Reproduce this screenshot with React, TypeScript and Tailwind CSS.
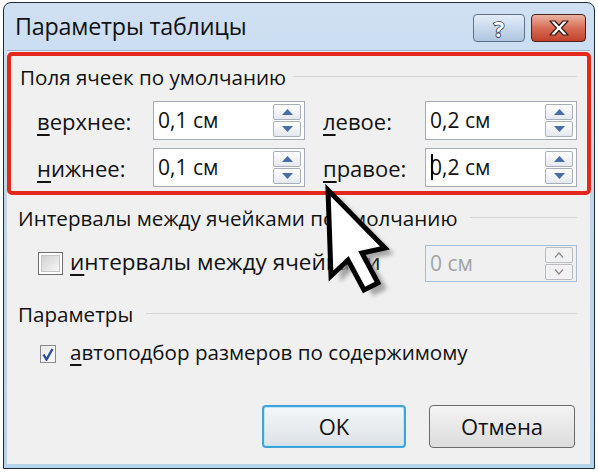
// Windows 7 "Параметры таблицы" dialog with a highlighted group and a big mouse pointer.

const FONT = "font-['Open_Sans','Noto_Sans',sans-serif]";

function Spin({ disabled = false }: { disabled?: boolean }) {
  const half =
    'flex-1 flex items-center justify-center rounded-[2px] border ' +
    (disabled
      ? 'border-[#b9bdc2] bg-[#f2f2f2]'
      : 'border-[#a8b0ba] bg-gradient-to-b from-white to-[#e4e8ee]');
  return (
    <div className="flex flex-col w-[28px] h-[33px] gap-[1px]">
      <div className={half}>
        {disabled ? (
          <svg width="10" height="6" viewBox="0 0 10 6">
            <path d="M1 5.5 L5 1 L9 5.5" fill="none" stroke="#8a8a8a" strokeWidth="1.2" />
          </svg>
        ) : (
          <svg width="11" height="6" viewBox="0 0 11 6">
            <path d="M0 6 L5.5 0 L11 6Z" fill="#4a6ca6" />
          </svg>
        )}
      </div>
      <div className={half}>
        {disabled ? (
          <svg width="10" height="6" viewBox="0 0 10 6">
            <path d="M1 0.5 L5 5 L9 0.5" fill="none" stroke="#8a8a8a" strokeWidth="1.2" />
          </svg>
        ) : (
          <svg width="11" height="6" viewBox="0 0 11 6">
            <path d="M0 0 L5.5 6 L11 0Z" fill="#4a6ca6" />
          </svg>
        )}
      </div>
    </div>
  );
}

function Field({ value, caret = false, disabled = false }: { value: string; caret?: boolean; disabled?: boolean }) {
  return (
    <div
      className={
        'flex items-center justify-between h-full pl-[4px] pr-[3px] border ' +
        (disabled ? 'bg-[#f0f0f0] border-[#a6bcd6]' : 'bg-white border-[#a5acb5]')
      }
    >
      <span className={'relative text-[21px] leading-none ' + (disabled ? 'text-[#a3a3a3]' : 'text-[#111]')}>
        {caret && <span className="absolute left-[1px] top-[-3px] w-[1.5px] h-[26px] bg-black" />}
        {value}
      </span>
      <Spin disabled={disabled} />
    </div>
  );
}

function Heading({ children, lineClass }: { children: React.ReactNode; lineClass?: string }) {
  return (
    <div className="flex items-center h-[26px]">
      <span className="text-[20.6px] leading-none text-[#111] whitespace-nowrap">{children}</span>
      <div className={'flex-1 h-[2px] border-t border-[#d8d8d8] border-b-white ' + (lineClass || '')} />
    </div>
  );
}

function Label({ pre, rest, size = 'text-[22px]' }: { pre: string; rest: string; size?: string }) {
  return (
    <span className={size + ' leading-none text-[#111] whitespace-nowrap'}>
      <span className="underline decoration-2 underline-offset-[4px]">{pre}</span>
      {rest}
    </span>
  );
}

function Cursor() {
  const pts = '8,7 11,93 28,77 44,107 58,100 42,70 65,65';
  return (
    <svg
      className="absolute left-[320px] top-[183px] pointer-events-none"
      width="90"
      height="130"
      viewBox="0 0 90 130"
    >
      <defs>
        <filter id="sh" x="-20%" y="-20%" width="140%" height="140%">
          <feGaussianBlur stdDeviation="2" />
        </filter>
      </defs>
      <polygon points={pts} transform="translate(9,6)" fill="#8d8d8d" opacity="0.75" filter="url(#sh)" />
      <polygon points={pts} fill="#fff" stroke="#000" strokeWidth="5" strokeLinejoin="miter" />
    </svg>
  );
}

export default function App() {
  return (
    <div className={`relative w-[598px] h-[472px] bg-white pt-[2px] pl-[3px] ${FONT}`}>
      <div className="flex flex-col w-[592px] h-[467px] border border-[#1f2a36] rounded-t-[8px] bg-gradient-to-b from-[#cfe0f2] via-[#bfd5ec] to-[#b4d4ec]">
        {/* title bar */}
        <div className="flex items-center justify-between h-[47px] pl-[11px] pr-[8px]">
          <span className="text-[23.3px] leading-none text-[#111] tracking-[-0.2px]">Параметры таблицы</span>
          <div className="flex items-center gap-[6px] pt-[2px]">
            <div className="flex items-center justify-center w-[52px] h-[28px] rounded-[4px] border border-[#5f7187] bg-gradient-to-b from-[#e4edf8] via-[#c9d9ec] to-[#aec4df]">
              <span className="text-[22px] font-bold leading-none text-white [-webkit-text-stroke:1.5px_#2b2b2b] [paint-order:stroke_fill]">?</span>
            </div>
            <div className="flex items-center justify-center w-[55px] h-[28px] rounded-[4px] border border-[#4b2219] bg-gradient-to-b from-[#eab3a3] via-[#d76b55] to-[#c2412a]">
              <svg width="22" height="16" viewBox="0 0 22 16">
                <path
                  d="M2 1 H7 L11 5.5 L15 1 H20 L13.5 8 L20 15 H15 L11 10.5 L7 15 H2 L8.5 8 Z"
                  fill="#fff"
                  stroke="#3a1a12"
                  strokeWidth="1.2"
                  strokeLinejoin="round"
                />
              </svg>
            </div>
          </div>
        </div>

        {/* client area */}
        <div className="flex-1 flex flex-col ml-[3px] mr-[4px] mb-[4px] bg-[#f0f0f0] border-t border-[#9fb4cc]">
          {/* highlighted group */}
          <div className="mt-[1px] ml-[0px] mr-[-1px] h-[143px] border-4 border-[#e5281c] rounded-[5px] pl-[9px] pr-[10px] pt-[8px]">
            <Heading lineClass="ml-[7px]">Поля ячеек по умолчанию</Heading>
            <div className="grid grid-cols-[116px_152px_120px_152px] grid-rows-[39px_39px] gap-y-[8px] mt-[11px] ml-[17px]">
              <div className="flex items-center">
                <Label pre="в" rest="ерхнее:" />
              </div>
              <Field value="0,1 см" />
              <div className="flex items-center pl-[18px]">
                <Label pre="л" rest="евое:" />
              </div>
              <Field value="0,2 см" />
              <div className="flex items-center">
                <Label pre="н" rest="ижнее:" />
              </div>
              <Field value="0,1 см" />
              <div className="flex items-center pl-[18px]">
                <Label pre="п" rest="равое:" />
              </div>
              <Field value="0,2 см" caret />
            </div>
          </div>

          {/* spacing section */}
          <div className="mt-[10px] pl-[11px] pr-[13px]">
            <Heading lineClass="ml-[12px]">Интервалы между ячейками по умолчанию</Heading>
          </div>
          <div className="flex items-center h-[37px] mt-[14px] pl-[31px] pr-[13px]">
            <div className="w-[25px] h-[23px] border border-[#6f6f6f] p-[2px] bg-white">
              <div className="w-full h-full border border-[#c4c4c4] bg-gradient-to-br from-[#d2d2d2] to-[#f6f6f6]" />
            </div>
            <span className="ml-[7px]">
              <Label pre="и" rest="нтервалы между ячейками" size="text-[22.5px]" />
            </span>
            <div className="ml-auto w-[152px] h-full">
              <Field value="0 см" disabled />
            </div>
          </div>

          {/* options section */}
          <div className="mt-[19px] pl-[11px] pr-[13px]">
            <Heading lineClass="ml-[13px]">Параметры</Heading>
          </div>
          <div className="flex items-center h-[26px] mt-[14px] pl-[33px]">
            <div className="flex items-center justify-center w-[16px] h-[18px] border border-[#8a8a8a] bg-gradient-to-br from-[#e6e6e6] to-white">
              <svg width="12" height="13" viewBox="0 0 12 13">
                <path d="M1.5 6.5 L4.5 11.5 L10.5 1" fill="none" stroke="#2b4d9e" strokeWidth="2.4" />
              </svg>
            </div>
            <span className="ml-[14px]">
              <Label pre="а" rest="втоподбор размеров по содержимому" size="text-[20.6px]" />
            </span>
          </div>

          {/* buttons */}
          <div className="flex justify-end gap-[23px] mt-[38px] pr-[15px]">
            <button className="w-[144px] h-[43px] rounded-[4px] border-2 border-[#3fa3db] bg-gradient-to-b from-[#f4f7f9] to-[#dce2e6] text-[22px] text-[#111] shadow-[inset_0_0_0_1px_#bfe4f7]">
              OK
            </button>
            <button className="w-[146px] h-[43px] rounded-[4px] border border-[#6b6b6b] bg-gradient-to-b from-[#f4f4f4] to-[#dcdcdc] text-[22px] text-[#111]">
              Отмена
            </button>
          </div>
        </div>
      </div>
      <Cursor />
    </div>
  );
}
